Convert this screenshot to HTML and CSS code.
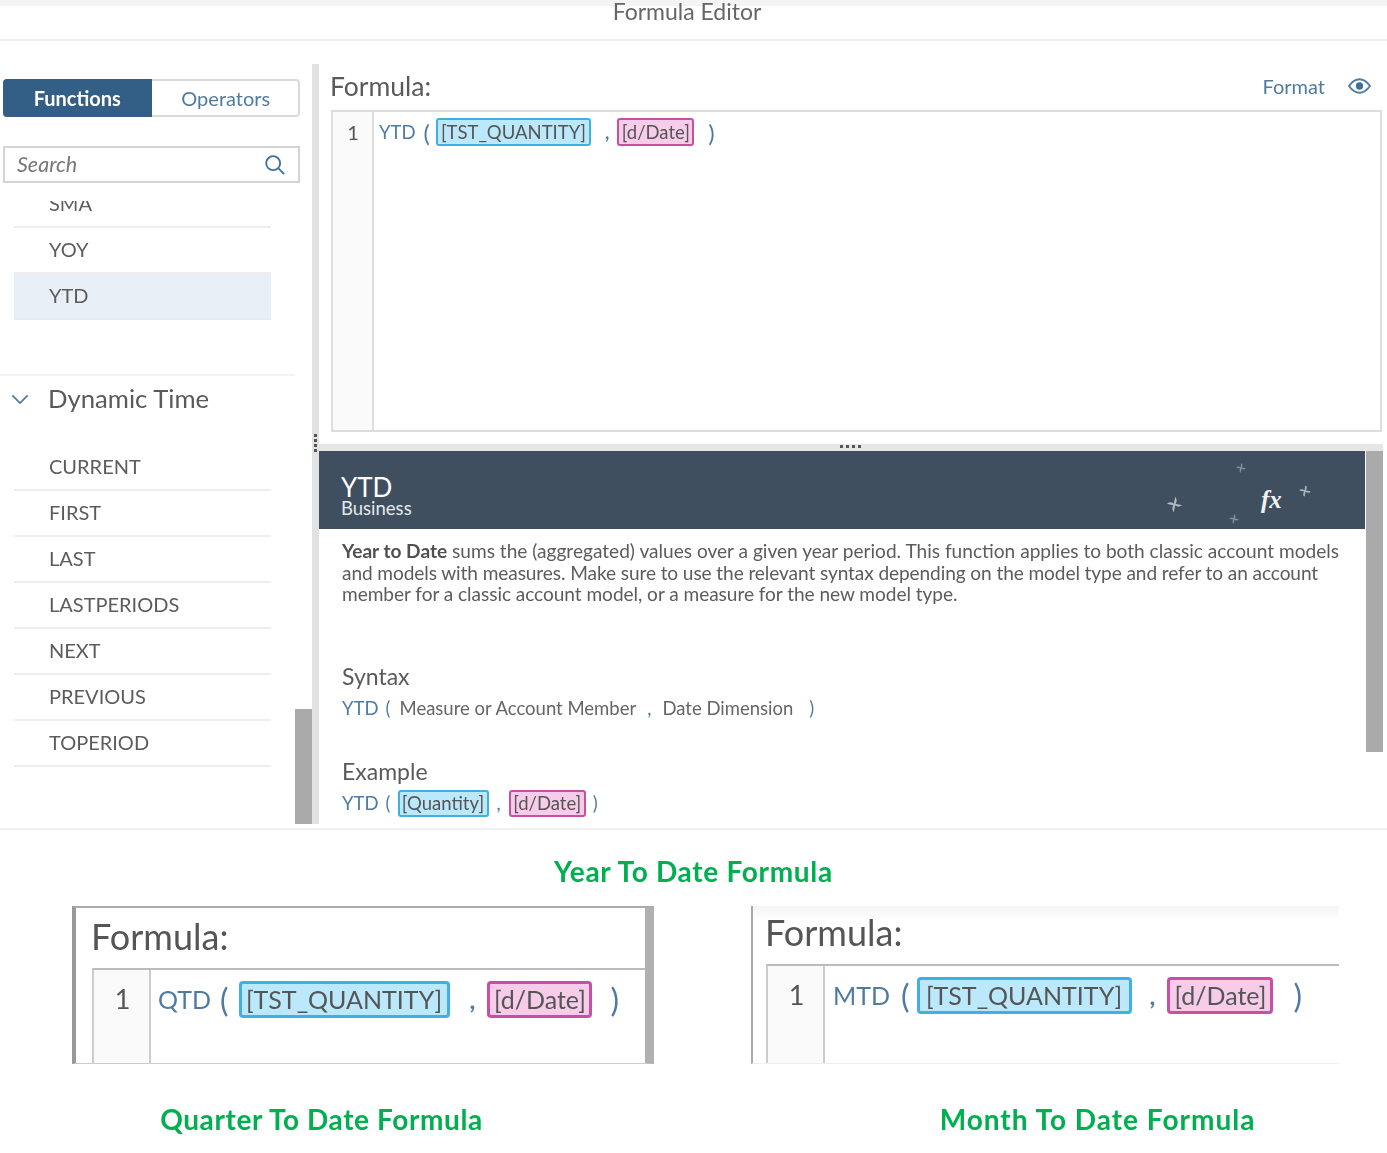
FILE: index.html
```html
<!DOCTYPE html>
<html lang="en">
<head>
<meta charset="utf-8">
<title>Formula Editor</title>
<link rel="stylesheet" href="styles.css">
</head>
<body>
<svg class="defs" width="0" height="0" aria-hidden="true"><defs>
  <path id="star" d="M12 12C10 8 10 5 9 2C12 4 13 8 12 12C16 10 19 10 22 9C20 12 16 13 12 12C14 16 14 19 15 22C12 20 11 16 12 12C8 14 5 14 2 15C4 12 8 11 12 12Z"/>
</defs></svg>
<main class="page">
  <section class="editor">
    <header class="titlebar"><span class="title">Formula Editor</span></header>
    <div class="workspace">
      <aside class="sidebar">
        <div class="segment">
          <span class="seg seg-on">Functions</span>
          <span class="seg seg-off">Operators</span>
        </div>
        <div class="search">
          <span class="search-text">Search</span>
          <svg class="search-icon" viewBox="0 0 24 24"><circle cx="10" cy="10" r="7.6"/><path d="M15.5 15.5L22 22"/></svg>
        </div>
        <ul class="list list-top">
          <li class="row row-clip">SMA</li>
          <li class="row">YOY</li>
          <li class="row row-on">YTD</li>
        </ul>
        <div class="group">
          <svg class="chev" viewBox="0 0 20 12"><path d="M1.500 1.500L10 10L18.500 1.500"/></svg>
          <span>Dynamic Time</span>
        </div>
        <ul class="list">
          <li class="row">CURRENT</li>
          <li class="row">FIRST</li>
          <li class="row">LAST</li>
          <li class="row">LASTPERIODS</li>
          <li class="row">NEXT</li>
          <li class="row">PREVIOUS</li>
          <li class="row">TOPERIOD</li>
        </ul>
        <div class="side-scroll"></div>
      </aside>
      <div class="vsplit"><span class="vdots"><i></i><i></i><i></i><i></i></span></div>
      <div class="content">
        <div class="formula-head">
          <span class="formula-label">Formula:</span>
          <span class="format">Format</span>
          <svg class="eye" viewBox="0 0 24 16"><path class="eye-o" d="M1 8C5 2.500 9 1 12 1C15 1 19 2.500 23 8C19 13.500 15 15 12 15C9 15 5 13.500 1 8Z"/><circle class="eye-p" cx="12" cy="8" r="3.800"/></svg>
        </div>
        <div class="code-box">
          <div class="gutter">1</div>
          <div class="code">
            <span class="tok fn">YTD</span><span class="tok paren p1">(</span>
            <span class="chip chip-blue c1">[TST_QUANTITY]</span><span class="tok comma">,</span>
            <span class="chip chip-pink c2">[d/Date]</span><span class="tok paren p2">)</span>
          </div>
        </div>
        <div class="hsplit"><span class="hdots"><i></i><i></i><i></i><i></i></span></div>
        <div class="detail">
          <div class="detail-head">
            <div class="d-name">YTD</div>
            <div class="d-cat">Business</div>
            <svg class="star s1" viewBox="0 0 24 24"><use href="#star"/></svg>
            <svg class="star s2" viewBox="0 0 24 24"><use href="#star"/></svg>
            <svg class="star s3" viewBox="0 0 24 24"><use href="#star"/></svg>
            <svg class="star s4" viewBox="0 0 24 24"><use href="#star"/></svg>
            <span class="fx">fx</span>
          </div>
          <div class="detail-body">
            <p class="desc"><span class="l1"><b>Year to Date</b> sums the (aggregated) values over a given year period. This function applies to both classic account models</span><span class="l2">and models with measures. Make sure to use the relevant syntax depending on the model type and refer to an account</span><span class="l3">member for a classic account model, or a measure for the new model type.</span></p>
            <h3 class="d-h syntax-h">Syntax</h3>
            <div class="d-line syntax-l"><span class="fn">YTD</span><span class="fn sp-a">(</span><span class="sp-b">Measure or Account Member</span><span class="fn sp-c">,</span><span class="sp-d">Date Dimension</span><span class="fn sp-e">)</span></div>
            <h3 class="d-h example-h">Example</h3>
            <div class="d-line example-l"><span class="fn">YTD</span><span class="fn sp-a">(</span><span class="chip chip-blue ex1">[Quantity]</span><span class="fn sp-f">,</span><span class="chip chip-pink ex2">[d/Date]</span><span class="fn sp-g">)</span></div>
          </div>
          <div class="detail-scroll"></div>
        </div>
      </div>
    </div>
  </section>

  <h2 class="caption caption-main">Year To Date Formula</h2>

  <div class="clips">
    <div class="clip clip-q">
      <div class="clip-label">Formula:</div>
      <div class="clip-box">
        <div class="clip-gutter">1</div>
        <div class="clip-code">
          <span class="fn">QTD</span><span class="fn q1">(</span><span class="chip chip-blue q2">[TST_QUANTITY]</span><span class="fn q3">,</span><span class="chip chip-pink q4">[d/Date]</span><span class="fn q5">)</span>
        </div>
      </div>
    </div>
    <div class="clip clip-m">
      <div class="clip-label">Formula:</div>
      <div class="clip-box">
        <div class="clip-gutter">1</div>
        <div class="clip-code">
          <span class="fn">MTD</span><span class="fn m1">(</span><span class="chip chip-blue m2">[TST_QUANTITY]</span><span class="fn m3">,</span><span class="chip chip-pink m4">[d/Date]</span><span class="fn m5">)</span>
        </div>
      </div>
    </div>
  </div>

  <div class="captions">
    <h2 class="caption caption-q">Quarter To Date Formula</h2>
    <h2 class="caption caption-m">Month To Date Formula</h2>
  </div>
</main>
</body>
</html>
```
FILE: styles.css
```css
* { box-sizing: border-box; }
html, body { margin: 0; padding: 0; background: #fff; }
body { font-family: "Lato", "Open Sans", sans-serif; color: #555; overflow: hidden; }
.defs { position: absolute; }
.page { width: 1387px; height: 1153px; overflow: hidden; filter: blur(0.45px); }
ul { list-style: none; margin: 0; padding: 0; }
h2, h3, p { margin: 0; font-weight: 400; }

.editor { height: 830px; border-bottom: 2px solid #f1f1f1; overflow: hidden; }
.titlebar { height: 41px; border-top: 6px solid #f4f4f4; border-bottom: 2px solid #eeeeee; text-align: center; padding-right: 13px; }
.title { display: block; font-size: 23px; line-height: 24px; margin-top: -7px; color: #666; }

.workspace { display: flex; margin-top: 23px; height: 760px; }

.sidebar { position: relative; width: 312px; flex: none; overflow: hidden; }
.segment { display: flex; margin: 15px 0 0 3px; width: 297px; height: 38px; border: 2px solid #d9d9d9; border-radius: 4px; font-size: 20px; }
.seg { width: 147px; margin: -2px 0; display: flex; align-items: center; justify-content: center; color: #4f7ba3; }
.seg-off { padding-left: 2px; }
.seg-on { width: 149px; margin-left: -2px; background: #335f86; color: #fff; font-weight: 700; border-radius: 4px 0 0 4px; }
.search { display: flex; align-items: center; justify-content: space-between; margin: 29px 0 0 3px; width: 297px; height: 37px; border: 2px solid #d4d4d4; padding: 0 12px 0 12px; }
.search-text { font-style: italic; font-size: 21.500px; line-height: 26px; margin-top: -2px; color: #777; }
.search-icon { width: 22px; height: 22px; fill: none; stroke: #3f719f; stroke-width: 2; }
.list { margin-left: 14px; width: 257px; font-size: 20px; }
.list-top { margin-top: 18px; overflow: hidden; }
.row { height: 46px; line-height: 42px; padding-left: 35px; border-bottom: 2px solid #eeeeee; color: #5c5c5c; }
.row-clip { margin-top: -19px; }
.row-on { background: #e8eff7; border-bottom-color: #e4ebf3; }
.group { display: flex; align-items: center; gap: 19px; margin-top: 54px; width: 295px; height: 71px; padding: 0 0 25px 11px; border-top: 2px solid #f2f2f2; font-size: 25.700px; color: #5a5a5a; }
.chev { width: 18px; height: 11px; margin-top: 2px; fill: none; stroke: #4f7ba3; stroke-width: 2; }
.side-scroll { position: absolute; left: 295px; top: 645px; width: 17px; height: 115px; background: #aaaaaa; }

.vsplit { position: relative; width: 7px; flex: none; background: #e2e2e2; }
.vdots { position: absolute; left: 2px; top: 370px; display: flex; flex-direction: column; gap: 2px; }
.vdots i, .hdots i { display: block; width: 3px; height: 3px; background: #555; }

.content { flex: 1; min-width: 0; display: flex; flex-direction: column; }
.formula-head { display: flex; align-items: center; height: 46px; padding: 0 16px 2px 11px; }
.formula-label { font-size: 26.500px; color: #5a5a5a; }
.format { margin-left: auto; font-size: 20px; color: #4f7ba3; }
.eye { width: 23px; height: 16px; margin-left: 23px; }
.eye-o { fill: none; stroke: #4f7ba3; stroke-width: 2; }
.eye-p { fill: #3f6f9b; }
.code-box { display: flex; margin: 0 5px 0 12px; height: 322px; border: 2px solid #dddddd; }
.gutter { width: 41px; flex: none; background: #fafafa; border-right: 2px solid #dddddd; text-align: center; font-size: 20px; line-height: 40px; color: #555; padding-left: 1px; }
.code { display: flex; align-items: center; align-self: flex-start; height: 40px; padding-left: 5px; font-size: 18.500px; }
.fn { color: #4f7ba3; }
.tok.paren { font-size: 24px; color: #4f7ba3; }
.tok.comma { color: #4f7ba3; font-weight: 700; }
.p1 { margin-left: 8px; }
.c1 { margin-left: 6px; width: 155px; height: 28px; }
.comma { margin-left: 14px; }
.c2 { margin-left: 8px; width: 77px; height: 28px; }
.p2 { margin-left: 14px; }
.chip { display: inline-flex; align-items: center; justify-content: center; border-radius: 3px; color: #555; white-space: nowrap; }
.chip-blue { background: #bce8fb; border: 2px solid #3fb0e2; }
.chip-pink { background: #f6cce9; border: 2px solid #c84fa6; }

.hsplit { position: relative; height: 7px; margin: 12px 4px 0 0; background: #e6e6e6; flex: none; }
.hdots { position: absolute; left: 521px; top: 1px; display: flex; gap: 3px; }
.detail { position: relative; flex: 1; min-height: 0; overflow: hidden; }
.detail-head { position: relative; height: 78px; margin-right: 22px; padding: 22px 0 0 22px; background: #3f4f5f; color: #fff; }
.d-name { font-size: 26px; line-height: 28px; }
.d-cat { font-size: 18.500px; line-height: 20px; margin-top: -3px; color: #e4e8ec; }
.star { position: absolute; fill: #b4bcc4; stroke: #b4bcc4; stroke-width: 1.500; transform: rotate(25deg); }
.s1 { left: 848px; top: 46px; width: 15px; height: 15px; }
.s2 { left: 917px; top: 12px; width: 10px; height: 10px; fill: #8e9aa6; stroke: #8e9aa6; }
.s3 { left: 980px; top: 34px; width: 12px; height: 12px; }
.s4 { left: 910px; top: 63px; width: 10px; height: 10px; fill: #8e9aa6; stroke: #8e9aa6; }
.fx { position: absolute; left: 942px; top: 34px; font-family: "Liberation Serif", serif; font-style: italic; font-weight: 700; font-size: 25px; line-height: 30px; color: #f2f2f2; }
.detail-body { padding: 11px 30px 0 23px; }
.desc { font-size: 19.100px; line-height: 21.500px; white-space: nowrap; color: #5c5c5c; }
.desc span { display: block; }
.desc .l2 { letter-spacing: -0.100px; }
.desc .l3 { letter-spacing: -0.055px; }
.desc b { font-weight: 700; color: #505050; }
.d-h { margin: 0; font-size: 23px; line-height: 30px; color: #5a5a5a; }
.syntax-h { margin-top: 56px; }
.example-h { margin-top: 36px; }
.d-line { display: flex; align-items: center; font-size: 18.500px; color: #666; white-space: nowrap; }
.syntax-l { height: 24px; margin-top: 5px; }
.example-l { height: 27px; margin-top: 4px; }
.sp-a { margin-left: 7px; }
.sp-b { margin-left: 9px; }
.sp-c { margin-left: 11px; }
.sp-d { margin-left: 11px; }
.sp-e { margin-left: 16px; }
.ex1 { margin-left: 7px; width: 91px; height: 27px; }
.sp-f { margin-left: 8px; }
.ex2 { margin-left: 8px; width: 77px; height: 27px; }
.sp-g { margin-left: 7px; }
.detail-scroll { position: absolute; right: 4px; top: 0; width: 17px; height: 301px; background: #aaaaaa; }

.caption { font-weight: 700; color: #00b050; font-size: 28px; letter-spacing: 0.600px; line-height: 42px; text-align: center; white-space: nowrap; }
.caption-main { height: 76px; padding: 20px 0 0 0; letter-spacing: 0.700px; }

.clips { display: flex; height: 158px; padding-left: 72px; gap: 97px; }
.clip { height: 158px; overflow: hidden; }
.clip-q { width: 582px; border-top: 2px solid #aaaaaa; border-left: 4px solid #999999; border-right: 9px solid #b0b0b0; border-bottom: 1px solid #cccccc; padding-left: 16px; }
.clip-m { width: 588px; border-left: 2px solid #aaaaaa; padding-left: 13px; background: linear-gradient(#f4f4f4, #fff 14px); border-bottom: 1px solid #eeeeee; }
.clip-label { height: 60px; line-height: 56px; font-size: 36px; color: #555; text-indent: -1px; }
.clip-m .clip-label { height: 58px; line-height: 52px; }
.clip-box { display: flex; height: 100px; border-top: 2px solid #bbbbbb; border-left: 2px solid #cccccc; }
.clip-gutter { width: 57px; flex: none; background: #fafafa; border-right: 2px solid #cccccc; text-align: center; font-size: 27px; line-height: 58px; color: #555; padding-left: 2px; }
.clip-code { display: flex; align-items: center; align-self: flex-start; height: 58px; padding-left: 7px; font-size: 25px; }
.clip-m .clip-code { padding-left: 8px; }
.clip-code .chip { height: 37px; border-width: 3px; border-radius: 4px; }
.q1 { margin-left: 9px; font-size: 32px; }
.q2 { margin-left: 10px; width: 211px; }
.q3 { margin-left: 20px; font-weight: 700; }
.q4 { margin-left: 12px; width: 105px; }
.q5 { margin-left: 18px; font-size: 32px; }
.m1 { margin-left: 11px; font-size: 32px; }
.m2 { margin-left: 7px; width: 215px; }
.m3 { margin-left: 18px; font-weight: 700; }
.m4 { margin-left: 12px; width: 106px; }
.m5 { margin-left: 20px; font-size: 32px; }

.captions { display: flex; margin-top: 34px; }
.caption-q { flex: none; width: 643px; }
.caption-m { flex: none; width: 709px; margin-left: 100px; letter-spacing: 1px; }
```
